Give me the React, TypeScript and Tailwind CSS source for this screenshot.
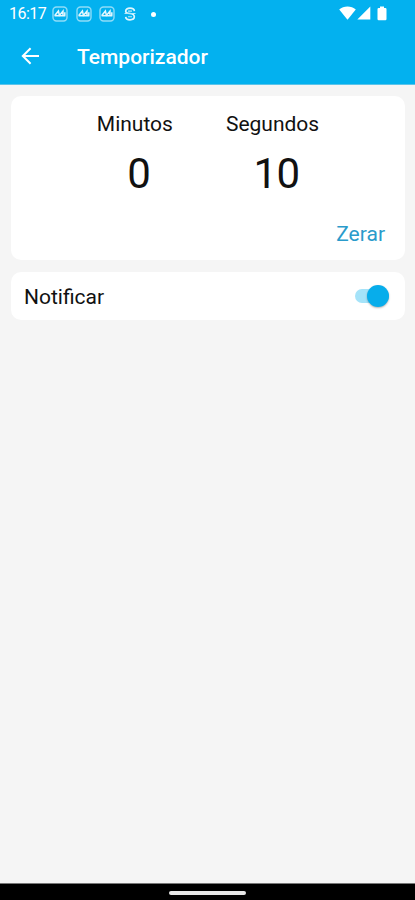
import { useState } from 'react';

function GalleryIcon() {
  return (
    <svg width="16" height="16" viewBox="0 0 16 16" fill="none" className="shrink-0">
      <rect x="1" y="1" width="14" height="14" rx="3.5" stroke="#8fdcf8" strokeWidth="1.4" />
      <path
        d="M2.6 9.8L6.4 5L7.4 9.4L11 5V9.8M2.6 9.8H13.4M12.8 6.2V9.8"
        stroke="#e4f7fe"
        strokeWidth="1.5"
      />
    </svg>
  );
}

function SyncIcon() {
  return (
    <svg width="12" height="14" viewBox="0 0 12 14" fill="none" className="shrink-0">
      <path
        d="M10.4 4.2C10.2 2 8.3 1.2 6 1.2C3.3 1.2 1.7 2.4 1.7 4.2C1.7 6 3 6.3 6 6.5C9 6.8 10.3 8 10.3 9.8C10.3 11.6 8.7 12.8 6 12.8C3.5 12.8 1.9 11.9 1.7 9.8"
        stroke="#dff6fe"
        strokeWidth="1.7"
      />
      <path d="M0.5 6.5H11.5M4 9.8H8M4 4.1H8" stroke="#b9eafb" strokeWidth="1.1" />
    </svg>
  );
}

function StatusBar() {
  return (
    <div className="flex h-7 items-center text-white">
      <span className="ml-[9px] w-[43px] text-[16px] leading-7 tracking-[-0.5px]">16:17</span>
      <div className="flex items-center gap-[7.5px]">
        <GalleryIcon />
        <GalleryIcon />
        <GalleryIcon />
      </div>
      <div className="ml-[9px] flex">
        <SyncIcon />
      </div>
      <span className="ml-[15px] h-[5px] w-[5px] rounded-full bg-white" />
      <div className="mr-[28px] ml-auto flex items-center pb-[2px]">
        <svg width="17" height="14" viewBox="0 0 17 14" fill="currentColor">
          <path d="M0.2 3.6C2.5 1.5 5.3 0.5 8.5 0.5C11.7 0.5 14.5 1.5 16.8 3.6L8.5 13.8Z" />
        </svg>
        <svg width="14" height="14" viewBox="0 0 14 14" fill="currentColor" className="ml-[1px]">
          <path d="M13.3 0.5V13.5H0.3Z" />
        </svg>
        <svg width="10" height="15" viewBox="0 0 10 15" fill="currentColor" className="ml-[6px]">
          <path d="M3 0.5H7V2H8.3Q9.5 2 9.5 3.2V13Q9.5 14.2 8.3 14.2H1.7Q0.5 14.2 0.5 13V3.2Q0.5 2 1.7 2H3Z" />
        </svg>
      </div>
    </div>
  );
}

function TimeColumn({ label, value }: { label: string; value: number }) {
  return (
    <div className="flex flex-col items-center">
      <span className="text-[21px] leading-7">{label}</span>
      <span className="mt-[11px] pl-2 text-[42px] leading-[50px] tracking-[-0.5px]">{value}</span>
    </div>
  );
}

export default function App() {
  const [minutes, setMinutes] = useState(0);
  const [seconds, setSeconds] = useState(10);
  const [notify, setNotify] = useState(true);

  function handleReset() {
    setMinutes(0);
    setSeconds(0);
  }

  return (
    <div className="flex h-[900px] w-[415px] flex-col overflow-hidden bg-[#f5f5f5] font-[Roboto,sans-serif] text-[#111111]">
      <header className="h-[85px] shrink-0 border-b border-[#5bc4ea] bg-[#03b1ef]">
        <StatusBar />
        <div className="flex h-[56px] items-center text-white">
          <button type="button" aria-label="Voltar" className="ml-[21px]">
            <svg width="19" height="18" viewBox="0 0 19 18" fill="none" stroke="currentColor" strokeWidth="2">
              <path d="M18 9H2M9.6 1.2L1.8 9L9.6 16.8" />
            </svg>
          </button>
          <h1 className="ml-[37px] pt-[2px] text-[21px] leading-7 font-medium">Temporizador</h1>
        </div>
      </header>

      <main className="flex flex-1 flex-col gap-3 pt-[11px] pr-[10px] pl-[11px]">
        <section className="flex h-[164px] flex-col rounded-[10px] bg-white pt-[14px]">
          <div className="flex justify-center gap-[53px]">
            <TimeColumn label="Minutos" value={minutes} />
            <TimeColumn label="Segundos" value={seconds} />
          </div>
          <button
            type="button"
            onClick={handleReset}
            className="mt-[21px] mr-[20px] self-end text-[21px] leading-7 text-[#2a9bcb]"
          >
            Zerar
          </button>
        </section>

        <section className="flex h-12 items-center justify-between rounded-[10px] bg-white pr-[16px] pl-[13px]">
          <span className="pt-[2px] text-[21px] leading-7">Notificar</span>
          <button
            type="button"
            role="switch"
            aria-checked={notify}
            aria-label="Notificar"
            onClick={() => setNotify(!notify)}
            className={`flex h-[14px] w-[34px] items-center rounded-full ${
              notify ? 'justify-end bg-[#a5e3f9]' : 'justify-start bg-gray-300'
            }`}
          >
            <span
              className={`h-[22px] w-[22px] shrink-0 rounded-full shadow-[0_1px_2px_rgba(0,0,0,0.3)] ${
                notify ? 'bg-[#07adeb]' : 'bg-gray-50'
              }`}
            />
          </button>
        </section>
      </main>

      <footer className="flex h-[17px] shrink-0 items-center justify-center border-t border-[#777777] bg-black pt-[1px]">
        <div className="h-[4px] w-[77px] rounded-full bg-[#e8e8e8]" />
      </footer>
    </div>
  );
}
